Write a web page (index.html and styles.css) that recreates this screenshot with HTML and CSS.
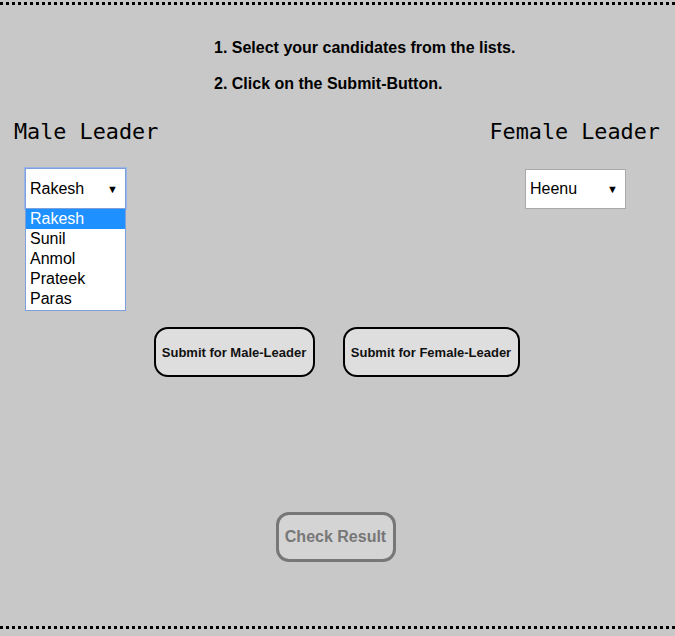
FILE: index.html
```html
<!DOCTYPE html>
<html>
<head>
<meta charset="utf-8">
<title>Leader Election</title>
<link rel="stylesheet" href="styles.css">
</head>
<body>
<div class="frame">
  <div class="steps">
    <p class="step">1. Select your candidates from the lists.</p>
    <p class="step">2. Click on the Submit-Button.</p>
  </div>
  <div class="columns">
    <div class="col col-male">
      <h2 class="heading">Male Leader</h2>
      <div class="select select-focus">
        <span class="select-value">Rakesh</span>
        <span class="select-arrow">&#9660;</span>
        <ul class="dropdown">
          <li class="option option-active">Rakesh</li>
          <li class="option">Sunil</li>
          <li class="option">Anmol</li>
          <li class="option">Prateek</li>
          <li class="option">Paras</li>
        </ul>
      </div>
    </div>
    <div class="col col-female">
      <h2 class="heading">Female Leader</h2>
      <div class="select select-female">
        <span class="select-value">Heenu</span>
        <span class="select-arrow">&#9660;</span>
      </div>
    </div>
  </div>
  <div class="submit-row">
    <button class="btn btn-male">Submit for Male-Leader</button>
    <button class="btn btn-female">Submit for Female-Leader</button>
  </div>
  <div class="result-row">
    <button class="btn-check" disabled>Check Result</button>
  </div>
</div>
</body>
</html>
```
FILE: styles.css
```css
html, body {
  margin: 0;
  padding: 0;
  background: #c8c8c8;
}
body {
  font-family: "Liberation Sans", Arial, sans-serif;
}
.frame {
  margin-top: 2px;
  height: 621px;
  border-top: 3px dotted #000;
  border-bottom: 3px dotted #000;
}
.steps {
  padding-left: 214px;
  padding-top: 33px;
}
.step {
  margin: 0 0 16px 0;
  font-size: 16px;
  line-height: 20px;
  font-weight: bold;
  color: #000;
}
.columns {
  display: flex;
  justify-content: space-between;
  padding: 9px 15px 0 14px;
}
.col {
  display: flex;
  flex-direction: column;
}
.col-male {
  align-items: flex-start;
}
.col-female {
  align-items: flex-end;
}
.heading {
  margin: 0;
  font-family: "DejaVu Sans Mono", monospace;
  font-weight: normal;
  font-size: 21.8px;
  line-height: 26px;
  color: #000;
}
.select {
  position: relative;
  box-sizing: border-box;
  width: 101px;
  height: 41px;
  margin-top: 23px;
  background: #fff;
  border: 1px solid #a9a9a9;
  display: flex;
  align-items: center;
  justify-content: space-between;
  padding: 0 7px 0 4px;
  font-size: 16px;
  color: #000;
}
.col-male .select {
  margin-left: 11px;
}
.select-focus {
  border: 1px solid #7d9fdc;
  box-shadow: 0 0 0 1px #9bb5e6;
}
.select-female {
  height: 40px;
  margin-top: 24px;
  margin-right: 34px;
}
.select-arrow {
  font-size: 11px;
}
.dropdown {
  position: absolute;
  top: 39px;
  left: -1px;
  width: 101px;
  box-sizing: border-box;
  margin: 0;
  padding: 0 0 1px 0;
  list-style: none;
  background: #fff;
  border: 1px solid #7d9fdc;
}
.option {
  height: 20px;
  line-height: 20px;
  padding-left: 4px;
  font-size: 16px;
  color: #000;
}
.option-active {
  background: #1e90ff;
  color: #fff;
}
.submit-row {
  display: flex;
  justify-content: center;
  gap: 28px;
  margin-top: 118px;
  padding-right: 2px;
}
.btn {
  box-sizing: border-box;
  height: 50px;
  background: #dedede;
  border: 2px solid #000;
  border-radius: 14px;
  font-family: "Liberation Sans", Arial, sans-serif;
  font-weight: bold;
  font-size: 13px;
  color: #111;
  padding: 0;
}
.btn-male {
  width: 161px;
}
.btn-female {
  width: 177px;
}
.result-row {
  display: flex;
  justify-content: center;
  margin-top: 135px;
  padding-right: 4px;
}
.btn-check {
  box-sizing: border-box;
  width: 120px;
  height: 50px;
  background: #d4d4d4;
  border: 3px solid #777;
  border-radius: 13px;
  font-family: "Liberation Sans", Arial, sans-serif;
  font-weight: bold;
  font-size: 16px;
  color: #777;
  padding: 0;
}
```
